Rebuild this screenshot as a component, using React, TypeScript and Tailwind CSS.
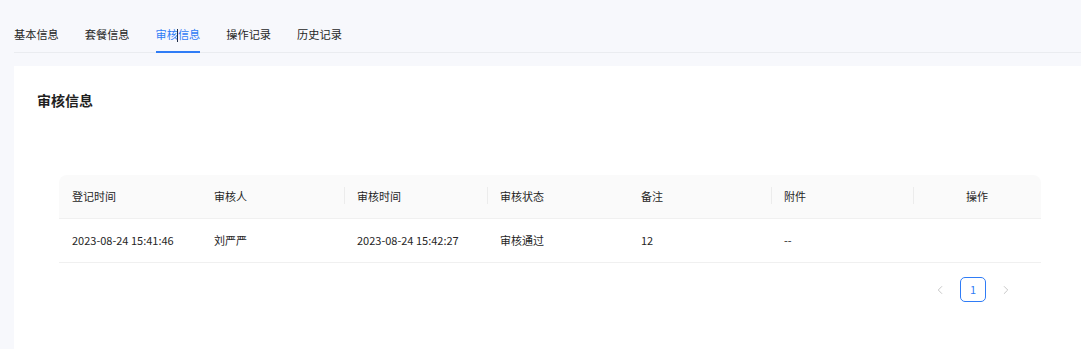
import { ChevronLeft, ChevronRight } from "lucide-react";

const tabs = ["基本信息", "套餐信息", "审核信息", "操作记录", "历史记录"];

const columns = [
  { title: "登记时间", width: "w-[142px]", divider: false },
  { title: "审核人", width: "w-[143px]", divider: false },
  { title: "审核时间", width: "w-[143px]", divider: true },
  { title: "审核状态", width: "w-[141px]", divider: true },
  { title: "备注", width: "w-[143px]", divider: false },
  { title: "附件", width: "w-[142px]", divider: true },
  { title: "操作", width: "flex-1", divider: true, center: true },
];

const rows = [["2023-08-24 15:41:46", "刘严严", "2023-08-24 15:42:27", "审核通过", "12", "--", ""]];

export default function App() {
  return (
    <div
      className="w-full h-[349px] overflow-hidden bg-[#f7f8fc] text-[#262626] flex flex-col"
      style={{ fontFamily: '"Noto Sans CJK SC", "Noto Sans", sans-serif' }}
    >
      {/* tabs */}
      <div className="ml-[14px] mt-[16px] flex gap-[26px] border-b border-[#eaecf0] relative">
        {tabs.map((t, i) => {
          const active = i === 2;
          return (
            <div
              key={t}
              className={`relative h-[36px] flex items-center text-[11.2px] ${active ? "text-[#2f7cf6]" : "text-[#262626]"}`}
            >
              {t}
              {active && <span className="absolute left-0 right-0 bottom-[-1px] h-[2px] bg-[#2f7cf6]" />}
            </div>
          );
        })}
        {/* text cursor */}
        <span className="absolute left-[163px] top-[13px] h-[13px] w-px bg-[#1d2a44]" />
      </div>

      {/* card */}
      <div className="ml-[14px] mt-[13px] flex-1 bg-white pl-[23px] pt-[24px]">
        <h2 className="text-[14px] font-bold leading-[20px] text-[#1f1f1f]">审核信息</h2>

        <div className="ml-[22px] mt-[65px] w-[982px]">
          <div className="flex h-[44px] bg-[#fafafa] rounded-t-[8px] border-b border-[#f0f0f0] text-[11px]">
            {columns.map((c) => (
              <div
                key={c.title}
                className={`relative ${c.width} flex items-center ${c.center ? "justify-center" : "pl-[13px]"}`}
              >
                {c.divider && <span className="absolute left-0 top-[12px] h-[17px] w-px bg-[#ececec]" />}
                {c.title}
              </div>
            ))}
          </div>
          {rows.map((r, ri) => (
            <div key={ri} className="flex h-[44px] border-b border-[#f0f0f0] text-[11px]">
              {r.map((cell, ci) => (
                <div
                  key={ci}
                  className={`${columns[ci].width} flex items-center ${columns[ci].center ? "justify-center" : "pl-[13px]"}`}
                >
                  {cell}
                </div>
              ))}
            </div>
          ))}

          {/* pagination */}
          <div className="flex justify-end items-center gap-[7px] pr-[22px] mt-[14px]">
            <button className="w-[26px] h-[25px] flex items-center justify-center text-[#bfbfbf]">
              <ChevronLeft size={14} strokeWidth={1.5} />
            </button>
            <button className="w-[26px] h-[25px] flex items-center justify-center rounded-[5px] border border-[#2f7cf6] text-[11px] text-[#2f7cf6]">
              1
            </button>
            <button className="w-[26px] h-[25px] flex items-center justify-center text-[#bfbfbf]">
              <ChevronRight size={14} strokeWidth={1.5} />
            </button>
          </div>
        </div>
      </div>
    </div>
  );
}
